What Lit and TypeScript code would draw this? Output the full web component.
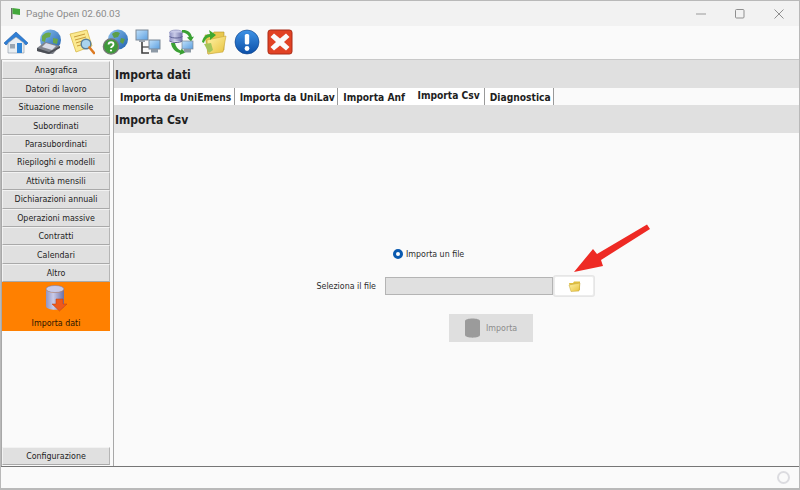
import { LitElement, html, css, svg } from "lit";
import { customElement } from "lit/decorators.js";

const menu = ["Anagrafica","Datori di lavoro","Situazione mensile","Subordinati","Parasubordinati","Riepiloghi e modelli","Attività mensili","Dichiarazioni annuali","Operazioni massive","Contratti","Calendari","Altro"];
const tabs = ["Importa da UniEmens","Importa da UniLav","Importa Anf","Importa Csv","Diagnostica"];

const defs = svg`<defs>
<linearGradient id="globe" x1="0" y1="0" x2="1" y2="1"><stop offset="0" stop-color="#8fc4f0"/><stop offset="1" stop-color="#1c5fae"/></linearGradient>
<linearGradient id="blue" x1="0" y1="0" x2="0" y2="1"><stop offset="0" stop-color="#3f93e6"/><stop offset="1" stop-color="#0b4fa8"/></linearGradient>
<linearGradient id="fold" x1="0" y1="0" x2="1" y2="1"><stop offset="0" stop-color="#fff3a8"/><stop offset="1" stop-color="#e8c23c"/></linearGradient>
<linearGradient id="db" x1="0" y1="0" x2="1" y2="0"><stop offset="0" stop-color="#8f93c4"/><stop offset=".4" stop-color="#c9cbe8"/><stop offset="1" stop-color="#6d70a6"/></linearGradient>
<linearGradient id="scr" x1="0" y1="0" x2="1" y2="1"><stop offset="0" stop-color="#bfe0fa"/><stop offset="1" stop-color="#5c9fe0"/></linearGradient>
</defs>`;

const icons = [
svg`<path d="M1 14 13 3l12 11-2 2-10-8-10 8z" fill="#2f7fd6" stroke="#1d5aa5" stroke-width=".6"/><path d="M5 14l8-6 8 6v10H5z" fill="#e9eef2" stroke="#8a96a3" stroke-width=".6"/><rect x="14" y="14" width="5" height="10" fill="#2f86d8"/><rect x="7" y="15" width="5" height="4.500" fill="#9aa6b2"/>`,
svg`<circle cx="14.500" cy="11" r="10.500" fill="url(#globe)"/><path d="M6 7c3-4 7-4 9-3l-1 4-4 1-1 4-3-1zM17 9l5 1-1 5-4-1z" fill="#6aa84a"/><path d="M1 19l8-6 15 4-7 8-5 0-11-3z" fill="#80848c"/><path d="M6 18l4-4 10 3-4 4z" fill="#d8dce8"/><path d="M1 19l12 4 11-6v2l-11 6-12-3z" fill="#4b4e55"/>`,
svg`<path d="M1 5 18 1l5 16-16 6z" fill="#fbe98e" stroke="#d8b94a" stroke-width=".8"/><path d="M5 8l11-3M6 11l11-3M7 14l6-2M8 17l4-1" stroke="#c99b3a" stroke-width="1"/><circle cx="17" cy="15" r="4.800" fill="#a9d3ee" stroke="#5a7f99" stroke-width="1.400"/><path d="M20.500 18.500 25 24" stroke="#dd7a22" stroke-width="2.600" stroke-linecap="round"/>`,
svg`<circle cx="16" cy="10.500" r="10" fill="url(#globe)"/><path d="M10 5c3-3 6-2 8-1l-2 4-4 1zM19 9l4 1-2 5-3-2z" fill="#5c9e48"/><circle cx="9" cy="17.500" r="7.600" fill="#3f9a3a" stroke="#777" stroke-width="1.400"/><path d="M6.500 15.500c.3-3 5-3 5 0 0 2-2.500 2-2.500 3.600" fill="none" stroke="#fff" stroke-width="1.800"/><circle cx="9" cy="21.500" r="1.100" fill="#fff"/>`,
svg`<rect x="1" y="1" width="12" height="10" fill="url(#scr)" stroke="#7b8795"/><rect x="4" y="11" width="6" height="2" fill="#9aa3ad"/><path d="M7 13v11h7" fill="none" stroke="#3f3f3f" stroke-width="1.600"/><path d="M7 18h7" stroke="#3f3f3f" stroke-width="1.200"/><rect x="14" y="11" width="11" height="9" fill="url(#scr)" stroke="#7b8795"/><rect x="16" y="20" width="7" height="3.500" fill="#8d99a5"/>`,
svg`<ellipse cx="8" cy="3.500" rx="6.500" ry="2.500" fill="#c9cbe8" stroke="#6d70a6" stroke-width=".5"/><rect x="1.500" y="3.500" width="13" height="9" fill="url(#db)"/><path d="M1.500 7.500c3 2 10 2 13 0M1.500 12c3 2 10 2 13 0" stroke="#5c5f92" fill="none"/><path d="M14 1c5-.5 9 2 10 7l2-.5-3 5-4-4 2-.5c-1-3-4-4.500-7-4.500z" fill="#3aa033"/><path d="M3 14c.5 5 4 9 9 10l-.5 2 6-2.500-4-4-.5 2c-3-1-5.500-4-6-7.500z" fill="#3aa033"/><rect x="14" y="12" width="11" height="8" fill="url(#scr)" stroke="#7b8795" stroke-width=".7"/><rect x="16" y="20" width="7" height="3.500" fill="#8d99a5"/>`,
svg`<path d="M4 6h7l2-3h10v18l-16 4z" fill="#e8c84e" stroke="#b1932b" stroke-width=".6"/><path d="M6 11l19-4-3 16-15 2z" fill="url(#fold)" stroke="#c7a63a" stroke-width=".6"/><path d="M1 13c1-5 4-8 8-8l-1-4 7 5-6 5v-3c-2 0-5 2-6 6z" fill="#3fa82f"/><path d="M3 15l7-1 2 7-4 3z" fill="#a5c55a"/>`,
svg`<circle cx="13" cy="13" r="12" fill="url(#blue)" stroke="#0d3f86" stroke-width=".6"/><rect x="10.800" y="5" width="4.400" height="10.500" rx="1.500" fill="#fff"/><circle cx="13" cy="19.500" r="2.400" fill="#fff"/>`,
svg`<rect x="1" y="1" width="24" height="24" rx="2.500" fill="#e14224" stroke="#a92b16"/><path d="M7 4.500l6 5 6-5 3.500 3.500-5.500 5 5.500 5-3.500 3.500-6-5-6 5-3.500-3.500 5.500-5-5.500-5z" fill="#fafafa"/>`,
];

@customElement("app-root")
export class AppRoot extends LitElement {
  static styles = css`
    :host { display: block; width: 800px; height: 490px; position: relative; overflow: hidden; background: #fafafa; font-family: "DejaVu Sans", sans-serif; font-stretch: condensed; font-size: 8.8px; color: #222; box-sizing: border-box; border: 1px solid #b9b9b9; border-bottom-width: 2px; }
    * { box-sizing: border-box; }
    .app { display: flex; flex-direction: column; height: 100%; }
    .title { height: 25px; flex: none; background: #f2f2f2; display: flex; align-items: center; padding-left: 9px; color: #8b8b8b; font-family: "Roboto", sans-serif; font-stretch: normal; font-size: 9.9px; }
    .title .txt { margin-left: 5px; }
    .win { margin-left: auto; display: flex; align-items: center; padding-right: 1px; }
    .win svg { width: 10px; height: 10px; display: block; }
    .win span { width: 39px; display: flex; justify-content: center; }
    .toolbar { height: 33px; flex: none; display: flex; align-items: center; padding-left: 2px; gap: 7px; background: #fafafa; padding-bottom: 1px; }
    .toolbar svg { width: 26px; height: 26px; display: block; }
    .main { flex: 1; min-height: 0; display: flex; border-bottom: 1px solid #767676; border-top: 1px solid #c8c8c8; }
    .side { width: 109px; flex: none; display: flex; flex-direction: column; padding-top: 1px; padding-bottom: 1px; border-left: 1px solid #a8a8a8; }
    .mi { height: 18.45px; flex: none; background: #e0e0e0; border-top: 1px solid #f2f2f2; border-left: 1px solid #f2f2f2; border-bottom: 1px solid #a9a9a9; border-right: 1px solid #b5b5b5; display: flex; align-items: center; justify-content: center; white-space: nowrap; color: #222; }
    .active { height: 49px; flex: none; background: #ff8000; display: flex; flex-direction: column; align-items: center; padding-top: 3px; color: #2a1500; }
    .active svg { width: 25px; height: 27px; display: block; margin-bottom: 6px; }
    .spacer { flex: 1; }
    .divider { width: 4px; flex: none; background: #fafafa; border-right: 1px solid #a8a8a8; }
    .content { flex: 1; min-width: 0; display: flex; flex-direction: column; background: #fafafa; }
    .hd { background: #e0e0e0; font-weight: 700; font-size: 12px; color: #1e1e1e; display: flex; align-items: center; padding-left: 1px; flex: none; }
    .h1 { height: 28px; padding-top: 2px; }
    .h2 { height: 28px; padding-top: 1px; }
    .tabs { height: 17px; flex: none; display: flex; background: #fafafa; font-weight: 700; font-size: 10.2px; color: #1e1e1e; }
    .tab { display: flex; align-items: center; padding: 1px 2.5px 0 5px; border-right: 1px solid #9a9a9a; background: #fff; white-space: nowrap; }
    .tab:first-child { padding-left: 6px; }
    .tab.sel { padding: 0 4px 2px 10px; }
    .tab.plain { border-right: none; }
    .body { flex: 1; min-height: 0; display: flex; flex-direction: column; padding-top: 112px; color: #2c2c2c; }
    .radio { display: flex; align-items: center; margin-left: 279px; gap: 3px; height: 18px; }
    .dot { width: 10px; height: 10px; border-radius: 50%; background: #fff; border: 3px solid #0a5ab0; }
    .row { display: grid; grid-template-columns: 262px 177px 41px; align-items: center; margin-top: 13px; height: 19px; }
    .lab { text-align: right; }
    .inp { margin-left: 9px; height: 18px; background: #e0e0e0; border: 1px solid #b4b4b4; }
    .fb { margin-left: 1px; height: 20px; background: #fff; border: 1px solid #ececec; border-radius: 2px; display: flex; align-items: center; justify-content: center; box-shadow: 0 0 0 1px #e6e6e6; }
    .fb svg { width: 13px; height: 12px; display: block; }
    .go { margin: 19px 0 0 335px; width: 84px; height: 28px; background: #dfdfdf; display: flex; align-items: center; gap: 5px; padding-left: 15px; color: #8b8b8b; }
    .go svg { width: 17px; height: 20px; display: block; }
    .status { height: 21px; flex: none; background: #fafafa; display: flex; align-items: center; justify-content: flex-end; padding-right: 9px; }
    .ring { width: 13px; height: 13px; border-radius: 50%; border: 2px solid #dcdce0; }
    .arrow { position: absolute; left: 569px; top: 218px; width: 84px; height: 54px; }
  `;

  render() {
    return html`<div class="app">
      <div class="title">
        <svg width="11" height="13" viewBox="0 0 11 13"><rect x="1" y="1" width="1.500" height="11" fill="#6b6b6b"/><path d="M2.500 1 10 2v6l-7.500-1z" fill="#43a83b"/></svg>
        <span class="txt">Paghe Open 02.60.03</span>
        <div class="win">
          <span><svg viewBox="0 0 10 10"><path d="M0 5h10" stroke="#9a9a9a"/></svg></span>
          <span><svg viewBox="0 0 10 10"><rect x=".5" y=".5" width="8.500" height="8.500" rx="1" fill="none" stroke="#8f8f8f"/></svg></span>
          <span><svg viewBox="0 0 10 10"><path d="M.5.5l9 9M9.500.5l-9 9" stroke="#8f8f8f"/></svg></span>
        </div>
      </div>
      <div class="toolbar">
        ${icons.map((i) => html`<svg viewBox="0 0 26 26">${defs}${i}</svg>`)}
      </div>
      <div class="main">
        <div class="side">
          ${menu.map((m) => html`<div class="mi">${m}</div>`)}
          <div class="active">
            <svg viewBox="0 0 25 27">${defs}
              <ellipse cx="11" cy="4" rx="9" ry="3.500" fill="#c9cbe8" stroke="#6d70a6" stroke-width=".5"/>
              <path d="M2 4v17c0 5 18 5 18 0V4c0 5-18 5-18 0z" fill="url(#db)"/>
              <path d="M12 14h7v5h4l-7.500 7-7.500-7h4z" fill="#ee5a1c" stroke="#c23f0c" stroke-width=".5"/>
            </svg>
            <span>Importa dati</span>
          </div>
          <div class="spacer"></div>
          <div class="mi">Configurazione</div>
        </div>
        <div class="divider"></div>
        <div class="content">
          <div class="hd h1">Importa dati</div>
          <div class="tabs">
            ${tabs.map((t) => html`<div class="tab ${t === "Importa Csv" ? "sel" : ""} ${t === "Importa Anf" ? "plain" : ""}">${t}</div>`)}
          </div>
          <div class="hd h2">Importa Csv</div>
          <div class="body">
            <div class="radio"><span class="dot"></span><span>Importa un file</span></div>
            <div class="row">
              <span class="lab">Seleziona il file</span>
              <div class="inp"></div>
              <div class="fb"><svg viewBox="0 0 13 12">${defs}<path d="M1 3h4l1-1.500h6V10H3z" fill="#e0bf3f"/><path d="M1 5l11-2-1 8-8 .5z" fill="url(#fold)" stroke="#c7a63a" stroke-width=".5"/></svg></div>
            </div>
            <div class="go">
              <svg viewBox="0 0 17 20"><path d="M1 3c0-3.500 15-3.500 15 0v14c0 3.500-15 3.500-15 0z" fill="#9b9b9b"/></svg>
              <span>Importa</span>
            </div>
          </div>
        </div>
      </div>
      <div class="status"><div class="ring"></div></div>
    </div>
    <svg class="arrow" viewBox="0 0 84 54"><path d="M4 53 23 30 27 35 77 5.500 80 10 31 41 33 47z" fill="#ee2a24"/></svg>`;
  }
}
